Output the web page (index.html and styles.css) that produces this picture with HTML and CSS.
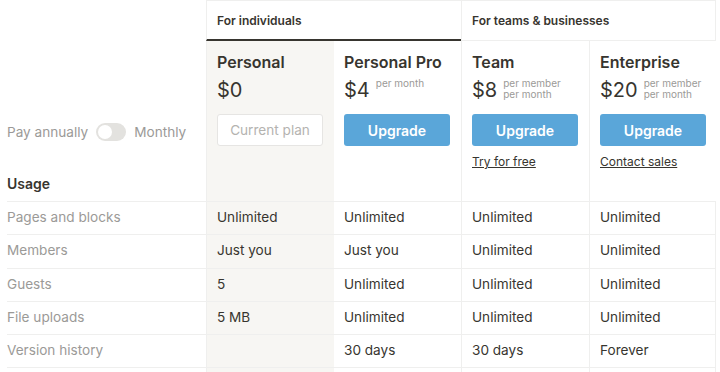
FILE: index.html
```html
<!DOCTYPE html>
<html lang="en">
<head>
    <meta charset="UTF-8">
    <title>Plans</title>
    <link rel="stylesheet" href="styles.css">
</head>
<body>
    <div class="plans">
        <!-- Group headers -->
        <div class="blank"></div>
        <div class="group group-active">For individuals</div>
        <div class="group group-teams">For teams &amp; businesses</div>

        <!-- Plan headers -->
        <div class="side">
            <div class="billing">
                <span>Pay annually</span>
                <span class="toggle"><span class="knob"></span></span>
                <span>Monthly</span>
            </div>
            <div class="section-title">Usage</div>
        </div>
        <div class="plan personal">
            <div class="plan-name">Personal</div>
            <div class="price"><span class="amount">$0</span></div>
            <button class="btn btn-current">Current plan</button>
        </div>
        <div class="plan">
            <div class="plan-name">Personal Pro</div>
            <div class="price"><span class="amount">$4</span><span class="per per-top">per month</span></div>
            <button class="btn">Upgrade</button>
        </div>
        <div class="plan team">
            <div class="plan-name">Team</div>
            <div class="price"><span class="amount">$8</span><span class="per">per member<br>per month</span></div>
            <button class="btn">Upgrade</button>
            <a class="link" href="#">Try for free</a>
        </div>
        <div class="plan team">
            <div class="plan-name">Enterprise</div>
            <div class="price"><span class="amount">$20</span><span class="per">per member<br>per month</span></div>
            <button class="btn">Upgrade</button>
            <a class="link" href="#">Contact sales</a>
        </div>

        <!-- Usage rows -->
        <div class="label">Pages and blocks</div>
        <div class="cell personal">Unlimited</div>
        <div class="cell">Unlimited</div>
        <div class="cell team">Unlimited</div>
        <div class="cell team">Unlimited</div>

        <div class="label">Members</div>
        <div class="cell personal">Just you</div>
        <div class="cell">Just you</div>
        <div class="cell team">Unlimited</div>
        <div class="cell team">Unlimited</div>

        <div class="label">Guests</div>
        <div class="cell personal">5</div>
        <div class="cell">Unlimited</div>
        <div class="cell team">Unlimited</div>
        <div class="cell team">Unlimited</div>

        <div class="label">File uploads</div>
        <div class="cell personal">5 MB</div>
        <div class="cell">Unlimited</div>
        <div class="cell team">Unlimited</div>
        <div class="cell team">Unlimited</div>

        <div class="label">Version history</div>
        <div class="cell personal"></div>
        <div class="cell">30 days</div>
        <div class="cell team">30 days</div>
        <div class="cell team">Forever</div>

        <div class="label"></div>
        <div class="cell personal"></div>
        <div class="cell"></div>
        <div class="cell team"></div>
        <div class="cell team"></div>
    </div>
</body>
</html>
```

FILE: styles.css
```css
/* General Styles */
* {
    box-sizing: border-box;
}

body {
    margin: 0;
    font-family: Inter, 'Liberation Sans', sans-serif;
    color: #37352f;
    background: #fff;
    overflow: hidden;
}

.plans {
    display: grid;
    grid-template-columns: 206px 128px 127px 128px 127px;
    grid-template-rows: 41px 160px;
    grid-auto-rows: 33.3px;
}

/* Group headers */
.group {
    grid-column: span 2;
    display: flex;
    align-items: center;
    padding: 0 10px;
    font-size: 12px;
    font-weight: 600;
    border-top: 1px solid #efefee;
    border-bottom: 1px solid #efefee;
}

.group-active {
    border-left: 1px solid #efefee;
    border-bottom: 2px solid #37352f;
    padding-top: 1px;
}

.group-teams {
    border-left: 1px solid #efefee;
    border-right: 1px solid #efefee;
}

/* Side column */
.side {
    display: flex;
    flex-direction: column;
    justify-content: flex-end;
    padding-left: 7px;
}

.billing {
    display: flex;
    align-items: center;
    gap: 8px;
    font-size: 13.6px;
    color: #9b9a97;
    margin-bottom: 34px;
}

.toggle {
    width: 30px;
    height: 18px;
    border-radius: 9px;
    background: #e3e2df;
    padding: 2px;
    display: flex;
}

.knob {
    width: 14px;
    height: 14px;
    border-radius: 50%;
    background: #fff;
}

.section-title {
    font-size: 14px;
    font-weight: 600;
    margin-bottom: 9px;
}

/* Plan headers */
.plan {
    padding: 11px 11px 0 10px;
    display: flex;
    flex-direction: column;
    align-items: flex-start;
}

.personal {
    background: #f7f6f3;
    border-left: 1px solid #efefee;
}

.team {
    border-left: 1px solid #efefee;
}

.plan.team:last-child,
.cell.team:nth-child(5n+3) {
    border-right: 1px solid #efefee;
}

.plan-name {
    font-size: 16px;
    font-weight: 600;
    line-height: 20px;
}

.price {
    display: flex;
    align-items: center;
    margin-top: 5px;
    height: 26px;
}

.amount {
    font-size: 20px;
    line-height: 24px;
}

.per {
    font-size: 10px;
    line-height: 10.5px;
    color: #9b9a97;
    margin-left: 6px;
    margin-top: -3px;
}

.per-top {
    align-self: flex-start;
    margin-top: 1px;
}

.btn {
    width: 106px;
    height: 32px;
    margin-top: 11px;
    border: none;
    border-radius: 3px;
    background: #5aa6d9;
    color: #fff;
    font-family: inherit;
    font-size: 14px;
    font-weight: 600;
}

.btn-current {
    background: #fff;
    border: 1px solid #e6e5e3;
    color: #b4b3b0;
    font-size: 13.6px;
    font-weight: 400;
}

.link {
    margin-top: 8px;
    font-size: 12px;
    line-height: 16px;
    color: #37352f;
}

/* Usage rows */
.label,
.cell {
    display: flex;
    align-items: center;
    padding-bottom: 2px;
    font-size: 13.6px;
    border-top: 1px solid #efefee;
}

.label {
    margin-left: 7px;
    color: #9b9a97;
}

.cell {
    padding-left: 10px;
}
```
